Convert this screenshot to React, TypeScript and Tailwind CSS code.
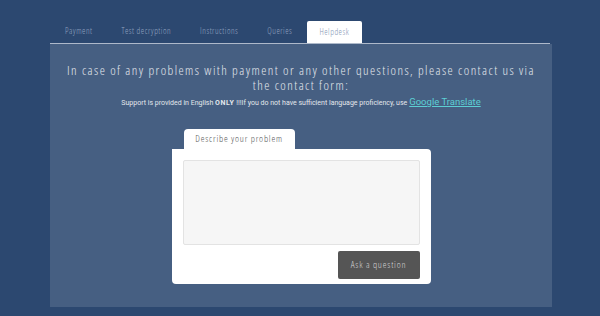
import React from 'react';

const tabs = ['Payment', 'Test decryption', 'Instructions', 'Queries'];

export default function App() {
  return (
    <div className="w-[600px] h-[316px] bg-[#2c4870] overflow-hidden pt-[21px] font-['Open_Sans',sans-serif] [font-stretch:condensed]">
      {/* tab strip */}
      <div className="mx-[50px] flex items-end h-[23px] border-b border-[#aeb9ca]">
        <div className="flex items-end h-full text-[8.5px] font-light tracking-[0.5px] text-[#93a4c0]">
          {tabs.map((t) => (
            <div key={t} className="px-[14.5px] pb-[5px] first:pl-[15px]">
              {t}
            </div>
          ))}
          <div className="h-full w-[55px] bg-white rounded-t-[2px] flex items-center justify-center text-[#8496b5]">
            Helpdesk
          </div>
        </div>
      </div>

      {/* panel */}
      <div className="mx-[50px] w-[502px] h-[263px] bg-[#465f82] flex flex-col items-center pt-[19px]">
        <h1 className="text-[13px] leading-[15px] font-light tracking-[1.45px] text-[#e3e7ed] text-center px-[12px]">
          In case of any problems with payment or any other questions, please contact us via the contact form:
        </h1>
        <p className="mt-[3px] flex items-baseline text-[7px] leading-[11px] text-[#e3e7ec] font-['Roboto',sans-serif] [font-stretch:normal]">
          <span>
            Support is provided in English <b className="font-bold tracking-[0.6px]">ONLY</b> !!!If you do not have sufficient language proficiency, use
          </span>
          <a className="ml-[2px] text-[9.5px] text-[#5ccfd4] underline">Google Translate</a>
        </p>

        {/* form */}
        <div className="mt-[20px] w-[259px] flex flex-col">
          <div className="ml-[12px] w-[111px] h-[20px] bg-white rounded-t-[4px] flex items-center justify-center text-[9.5px] font-light tracking-[0.8px] text-[#555555]">
            Describe your problem
          </div>
          <div className="bg-white rounded-[4px] rounded-tl-none px-[11px] pt-[11px] pb-[5px] flex flex-col items-end">
            <textarea className="w-full h-[85px] bg-[#f6f6f6] border border-[#e3e3e3] rounded-[2px] resize-none outline-none block" />
            <button className="mt-[6px] w-[82px] h-[28px] bg-[#555555] rounded-[2px] text-[9.5px] font-light tracking-[0.8px] text-[#d4d4d4]">
              Ask a question
            </button>
          </div>
        </div>
      </div>
    </div>
  );
}
